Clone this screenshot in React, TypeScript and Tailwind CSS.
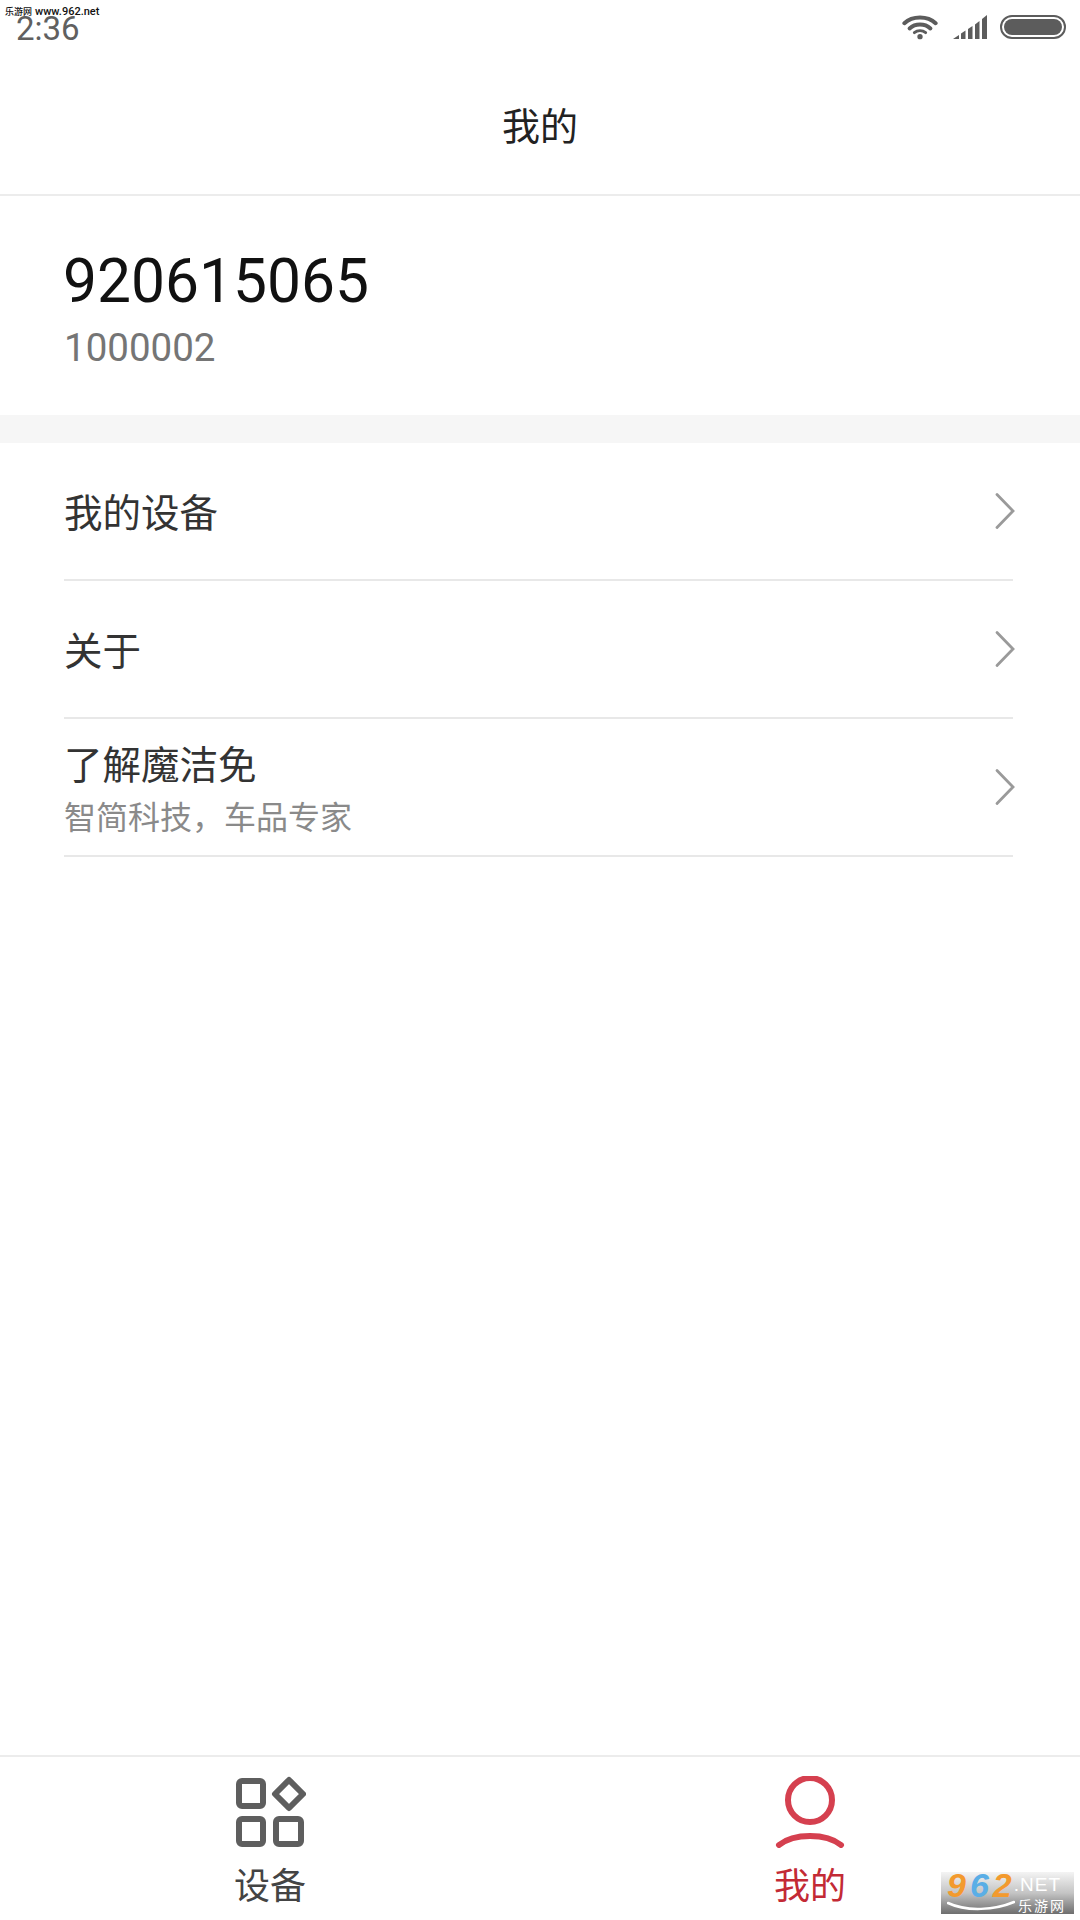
import React from "react";

const font = { fontFamily: "Roboto, 'Noto Sans CJK SC', sans-serif" };

function Chevron() {
  return (
    <svg width="22" height="38" viewBox="0 0 22 38" fill="none" className="mr-[-3px] shrink-0">
      <path d="M3 2.5 L19 19 L3 35.5" stroke="#9a9a9a" strokeWidth="2.8" strokeLinecap="round" strokeLinejoin="miter" />
    </svg>
  );
}

function Row({ title, sub }: { title: string; sub?: string }) {
  return (
    <div className="flex h-[138px] items-center justify-between border-b-2 border-[#e8e8e8]">
      <div className="flex flex-col pt-[5px]">
        <div className="text-[38.5px] leading-[52px] text-[#333333]">{title}</div>
        {sub && <div className="mt-[5px] text-[32px] leading-[42px] text-[#8a8a8a]">{sub}</div>}
      </div>
      <Chevron />
    </div>
  );
}

export default function App() {
  return (
    <div className="relative flex h-[1920px] w-[1080px] flex-col overflow-hidden bg-white" style={font}>
      {/* status bar */}
      <div className="flex h-[56px] shrink-0 items-start justify-between pl-[16px] pr-[14px]">
        <div className="mt-[17px] text-[33px] leading-[24px] text-[#606060]">2:36</div>
        <div className="mt-[14px] flex items-center">
          <svg width="36" height="26" viewBox="0 0 38 26" fill="none" className="mr-[15px]">
            <path d="M2.5 9 C11 1 27 1 35.5 9" stroke="#5c5c5c" strokeWidth="4.2" strokeLinecap="round" />
            <path d="M8 14.5 C14 9 24 9 30 14.5" stroke="#5c5c5c" strokeWidth="4.2" strokeLinecap="round" />
            <path d="M13 19 C16.5 16 21.5 16 25 19" stroke="#5c5c5c" strokeWidth="3" strokeLinecap="round" />
            <circle cx="19" cy="23.2" r="2.8" fill="#5c5c5c" />
          </svg>
          <svg width="34" height="24" viewBox="0 0 34 24" fill="#5c5c5c" className="mr-[13px]">
            <path d="M0 24 L6 20 V24 Z" />
            <path d="M8 18.5 L12.5 15.5 V24 H8 Z" />
            <path d="M15 14 L19.5 11 V24 H15 Z" />
            <path d="M22 9.5 L26.5 6 V24 H22 Z" />
            <path d="M29 4 L34 0 V24 H29 Z" />
          </svg>
          <div className="flex h-[24px] w-[66px] items-center justify-center rounded-full border-2 border-[#5c5c5c] bg-white">
            <div className="h-[16px] w-[58px] rounded-full bg-[#5c5c5c]" />
          </div>
        </div>
      </div>

      {/* header */}
      <div className="flex h-[140px] shrink-0 items-center justify-center border-b-2 border-[#ececec] pt-[5px] text-[38px] text-[#222222]">
        我的
      </div>

      {/* profile */}
      <div className="flex h-[219px] shrink-0 flex-col pl-[63px] pr-[64px] pt-[50px]">
        <div className="text-[60.5px] leading-[72px] text-[#111111]">920615065</div>
        <div className="ml-[1px] mt-[7px] text-[38.5px] leading-[46px] text-[#757575]">1000002</div>
      </div>

      <div className="h-[28px] shrink-0 bg-[#f6f6f6]" />

      {/* list */}
      <div className="flex flex-col pl-[64px] pr-[67px]">
        <Row title="我的设备" />
        <Row title="关于" />
        <Row title="了解魔洁免" sub="智简科技，车品专家" />
      </div>

      <div className="flex-1" />

      {/* tab bar */}
      <div className="flex h-[165px] shrink-0 border-t-2 border-[#ececec]">
        <div className="flex w-[540px] flex-col items-center pt-[19px]">
          <svg width="72" height="72" viewBox="0 0 72 72" fill="none" stroke="#5e5e5e" strokeWidth="6" strokeLinejoin="round">
            <rect x="5" y="5" width="24" height="25" rx="3" />
            <rect x="5" y="43" width="24" height="25" rx="3" />
            <rect x="42" y="43" width="25" height="25" rx="3" />
            <path d="M55 4 L69 18 L55 32 L41 18 Z" />
          </svg>
          <div className="mt-[17px] text-[36px] leading-[44px] text-[#444444]">设备</div>
        </div>
        <div className="flex w-[540px] flex-col items-center pt-[19px]">
          <svg width="72" height="72" viewBox="0 0 72 72" fill="none" stroke="#d5404f" strokeWidth="6" strokeLinecap="round">
            <circle cx="36" cy="24" r="22" />
            <path d="M5 69 C20 57 52 57 67 69" />
          </svg>
          <div className="mt-[17px] text-[36px] leading-[44px] text-[#c32a35]">我的</div>
        </div>
      </div>

      {/* watermarks */}
      <div className="absolute left-[5px] top-[6px] flex items-center gap-[3px] text-[11px] leading-[12px] font-medium text-[#111111]">
        <span className="text-[9px]">乐游网</span>
        <span>www.962.net</span>
      </div>
      <div className="absolute left-[941px] top-[1872px] flex h-[42px] w-[133px] flex-col bg-gradient-to-b from-[#f4f4f4] via-[#c4c4c4] to-[#6e6e6e] pl-[6px]">
        <div className="flex h-[26px] items-center">
          <span className="text-[34px] leading-[26px] font-bold italic tracking-[4px]" style={{ fontFamily: "'Liberation Sans', sans-serif" }}>
            <span className="text-[#f39a2e]">9</span>
            <span className="text-[#5aaee6]">6</span>
            <span className="text-[#f39a2e]">2</span>
          </span>
          <span className="ml-[-2px] text-[19px] leading-[26px] tracking-[1px] text-white" style={{ fontFamily: "'Liberation Sans', sans-serif" }}>.NET</span>
        </div>
        <div className="flex h-[16px] items-center">
          <svg width="68" height="12" viewBox="0 0 68 12" fill="none" className="shrink-0">
            <path d="M1 3 C20 12 48 10 67 2" stroke="#ffffff" strokeWidth="2.5" strokeLinecap="round" />
          </svg>
          <span className="ml-[3px] text-[14px] leading-[16px] tracking-[2px] text-white">乐游网</span>
        </div>
      </div>
    </div>
  );
}
